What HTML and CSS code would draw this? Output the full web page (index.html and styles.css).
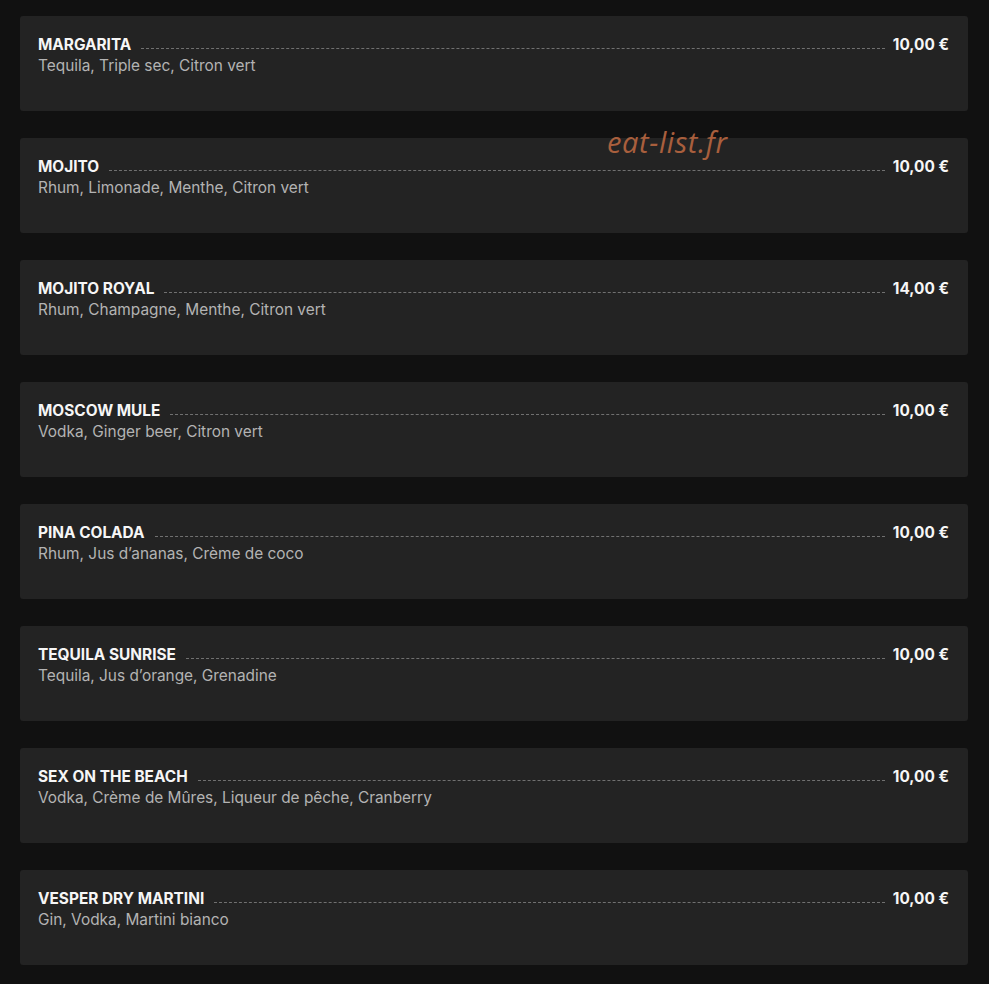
FILE: index.html
```html
<!DOCTYPE html>
<html lang="fr">
<head>
    <meta charset="UTF-8">
    <meta name="viewport" content="width=device-width, initial-scale=1.0">
    <title>Cocktails</title>
    <link rel="stylesheet" href="styles.css">
</head>
<body>
    <div class="menu">
        <!-- Cocktails -->
        <div class="item">
            <div class="item-row">
                <span class="item-name">MARGARITA</span>
                <span class="leader"></span>
                <span class="item-price">10,00 €</span>
            </div>
            <div class="item-desc">Tequila, Triple sec, Citron vert</div>
        </div>

        <div class="item">
            <div class="item-row">
                <span class="item-name">MOJITO</span>
                <span class="leader"></span>
                <span class="item-price">10,00 €</span>
            </div>
            <div class="item-desc">Rhum, Limonade, Menthe, Citron vert</div>
        </div>

        <div class="item">
            <div class="item-row">
                <span class="item-name">MOJITO ROYAL</span>
                <span class="leader"></span>
                <span class="item-price">14,00 €</span>
            </div>
            <div class="item-desc">Rhum, Champagne, Menthe, Citron vert</div>
        </div>

        <div class="item">
            <div class="item-row">
                <span class="item-name">MOSCOW MULE</span>
                <span class="leader"></span>
                <span class="item-price">10,00 €</span>
            </div>
            <div class="item-desc">Vodka, Ginger beer, Citron vert</div>
        </div>

        <div class="item">
            <div class="item-row">
                <span class="item-name">PINA COLADA</span>
                <span class="leader"></span>
                <span class="item-price">10,00 €</span>
            </div>
            <div class="item-desc">Rhum, Jus d’ananas, Crème de coco</div>
        </div>

        <div class="item">
            <div class="item-row">
                <span class="item-name">TEQUILA SUNRISE</span>
                <span class="leader"></span>
                <span class="item-price">10,00 €</span>
            </div>
            <div class="item-desc">Tequila, Jus d’orange, Grenadine</div>
        </div>

        <div class="item">
            <div class="item-row">
                <span class="item-name">SEX ON THE BEACH</span>
                <span class="leader"></span>
                <span class="item-price">10,00 €</span>
            </div>
            <div class="item-desc">Vodka, Crème de Mûres, Liqueur de pêche, Cranberry</div>
        </div>

        <div class="item">
            <div class="item-row">
                <span class="item-name">VESPER DRY MARTINI</span>
                <span class="leader"></span>
                <span class="item-price">10,00 €</span>
            </div>
            <div class="item-desc">Gin, Vodka, Martini bianco</div>
        </div>
    </div>

    <div class="watermark">eat-list.fr</div>
</body>
</html>
```

FILE: styles.css
```css
* {
    margin: 0;
    padding: 0;
    box-sizing: border-box;
}

body {
    font-family: Inter, 'Noto Sans', sans-serif;
    background-color: #111111;
    color: #f4f4f4;
    padding: 16px 21px 0 20px;
    height: 100vh;
    overflow: hidden;
    position: relative;
}

.menu {
    display: flex;
    flex-direction: column;
    gap: 27px;
}

.item {
    background: #232323;
    border-radius: 3px;
    height: 95px;
    padding: 18px 19px 0 18px;
}

.item-row {
    display: flex;
    align-items: flex-end;
}

.item-name,
.item-price {
    font-size: 15.4px;
    line-height: 21px;
    font-weight: 700;
    white-space: nowrap;
    color: #f6f6f6;
}

.leader {
    flex: 1;
    border-bottom: 1px dashed #707070;
    margin: 0 8px 6px 10px;
}

.item-desc {
    font-size: 15.4px;
    line-height: 21px;
    color: #b3b3b3;
}

.watermark {
    position: absolute;
    top: 122px;
    left: 607px;
    font-family: 'Open Sans', sans-serif;
    font-style: italic;
    font-size: 29px;
    letter-spacing: 0.6px;
    color: #a95f3d;
}
```
